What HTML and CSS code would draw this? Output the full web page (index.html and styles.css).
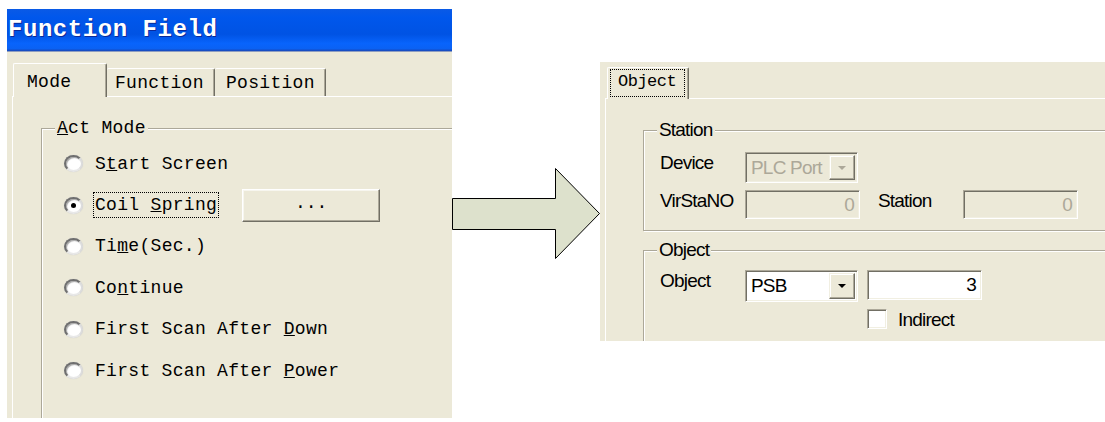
FILE: index.html
```html
<!DOCTYPE html>
<html>
<head>
<meta charset="utf-8">
<title>Function Field</title>
<link rel="stylesheet" href="styles.css">
</head>
<body>
<div class="stage">
  <div class="dlg dlg-left">
    <div class="titlebar">Function Field</div>
    <div class="client">
      <div class="tabs">
        <div class="tab tab-sel tab-mode">Mode</div>
        <div class="tab tab-func">Function</div>
        <div class="tab tab-pos">Position</div>
      </div>
      <div class="tabbody">
        <fieldset class="group group-act">
          <legend><u>A</u>ct Mode</legend>
          <div class="options">
            <div class="opt"><span class="radio"></span><span class="olbl">S<u>t</u>art Screen</span></div>
            <div class="opt"><span class="radio on"></span><span class="olbl focus">Coil <u>S</u>pring</span><span class="btn dots">...</span></div>
            <div class="opt"><span class="radio"></span><span class="olbl">Ti<u>m</u>e(Sec.)</span></div>
            <div class="opt"><span class="radio"></span><span class="olbl">Co<u>n</u>tinue</span></div>
            <div class="opt"><span class="radio"></span><span class="olbl">First Scan After <u>D</u>own</span></div>
            <div class="opt"><span class="radio"></span><span class="olbl">First Scan After <u>P</u>ower</span></div>
          </div>
        </fieldset>
      </div>
    </div>
  </div>

  <svg class="arrow" width="148" height="92" viewBox="0 0 148 92" xmlns="http://www.w3.org/2000/svg">
    <polygon points="0.5,30.5 103.5,30.5 103.5,0.5 147.5,45.5 103.5,90.5 103.5,61.5 0.5,61.5" fill="#dde1cc" stroke="#000" stroke-width="1"/>
  </svg>

  <div class="dlg dlg-right">
    <div class="tabs-r">
      <div class="tab-obj"><div class="focusbox">Object</div></div>
    </div>
    <div class="tabbody-r">
      <fieldset class="group group-st">
        <legend>Station</legend>
        <div class="rows">
          <div class="row">
            <span class="lab">Device</span>
            <div class="combo disabled combo-dev"><span class="val">PLC Port</span><span class="dd"></span></div>
          </div>
          <div class="row">
            <span class="lab">VirStaNO</span>
            <div class="field disabled">0</div>
            <span class="lab lab2">Station</span>
            <div class="field disabled">0</div>
          </div>
        </div>
      </fieldset>
      <fieldset class="group group-obj">
        <legend>Object</legend>
        <div class="rows">
          <div class="row">
            <span class="lab">Object</span>
            <div class="combo combo-obj"><span class="val">PSB</span><span class="dd"></span></div>
            <div class="field field-num">3</div>
          </div>
          <div class="row row-chk">
            <span class="check"></span>
            <span class="chklbl">Indirect</span>
          </div>
        </div>
      </fieldset>
    </div>
  </div>
</div>
</body>
</html>
```

FILE: styles.css
```css
* { box-sizing: border-box; }
html, body { margin: 0; padding: 0; background: #fff; }
body { width: 1105px; height: 422px; overflow: hidden; }

.stage { display: flex; align-items: flex-start; padding-left: 7px; }

.dlg { background: #ece9d8; overflow: hidden; flex: none; }

/* ---------- left dialog ---------- */
.dlg-left {
  margin-top: 9px;
  width: 445px;
  height: 409px;
  display: flex;
  flex-direction: column;
}
.titlebar {
  flex: none;
  height: 43px;
  padding-left: 1px;
  color: #fff;
  font: bold 24px/42px "Liberation Mono", monospace;
  letter-spacing: 0.55px;
  white-space: nowrap;
  text-shadow: 1px 1px 0 #0a2a9a;
  background: linear-gradient(to bottom, #0a5ae6 0%, #0057ec 20%, #0053e4 60%, #0864fc 82%, #0a62f4 94%, #1948b8 100%);
  border-bottom: 1px solid #8e9dc0;
}
.client {
  flex: 1;
  min-height: 0;
  display: flex;
  flex-direction: column;
  padding: 11px 0 0 5px;
}
.tabs {
  flex: none;
  position: relative;
  display: flex;
  align-items: flex-end;
  height: 34px;
  margin-bottom: -1px;
  padding-left: 1px;
}
.tab {
  flex: none;
  height: 28px;
  margin-bottom: 1px;
  padding-top: 4px;
  background: #ece9d8;
  border-top: 1px solid #fff;
  border-right: 1px solid #716f64;
  box-shadow: inset -1px 0 0 #aca899;
  border-radius: 2px 2px 0 0;
  font: 18px/20px "Liberation Mono", monospace;
  letter-spacing: 0.3px;
  white-space: nowrap;
  color: #000;
}
.tab-sel {
  height: 34px;
  margin-bottom: 0;
  padding-top: 8px;
  border-left: 1px solid #fff;
}
.tab-mode { width: 94px; padding-left: 13px; }
.tab-func { width: 108px; padding-left: 8px; }
.tab-pos { width: 111px; padding-left: 11px; }

.tabbody {
  flex: 1;
  min-height: 0;
  border-top: 1px solid #fff;
  border-left: 1px solid #fff;
}

.group {
  margin: 0;
  min-width: 0;
  border: 1px solid #aca899;
  box-shadow: inset 1px 1px 0 #fff, 1px 1px 0 #fff;
}
.group legend {
  padding: 0 2px;
  background: #ece9d8;
}
.group-act {
  margin: 21px 0 0 28px;
  width: 480px;
  height: 340px;
  padding: 5px 0 0 13px;
  font: 18px/20px "Liberation Mono", monospace;
  letter-spacing: 0.3px;
  color: #000;
}
.options { padding-left: 9px; }
.opt {
  display: flex;
  align-items: center;
  height: 41.4px;
  white-space: nowrap;
}
.radio {
  flex: none;
  width: 19px;
  height: 17px;
  margin-right: 12px;
  border-radius: 50%;
  background: #fff;
  border: 2px solid;
  border-color: #6f6f6f #dcdcdc #e8e8e8 #6f6f6f;
  box-shadow: inset 1px 1px 1px #a8a8a8, 0 0 1px #c8c8c8;
  display: flex;
  align-items: center;
  justify-content: center;
}
.radio.on::after {
  content: "";
  width: 5px;
  height: 5px;
  border-radius: 50%;
  background: #000;
}
.focus {
  border: 1px dotted #000;
  padding: 2px 1px 2px 1px;
  margin-left: -2px;
}
.btn {
  flex: none;
  display: flex;
  align-items: center;
  justify-content: center;
  background: #ece9d8;
  border: 1px solid;
  border-color: #fff #716f64 #716f64 #fff;
  box-shadow: inset -1px -1px 0 #aca899, inset 1px 1px 0 #f7f6ef;
}
.dots {
  width: 138px;
  height: 33px;
  margin-left: 23px;
  font: 18px/20px "Liberation Mono", monospace;
  letter-spacing: 0;
  padding-bottom: 4px;
}

/* ---------- arrow ---------- */
.arrow { flex: none; display: block; margin-top: 168px; }

/* ---------- right dialog ---------- */
.dlg-right {
  margin-top: 62px;
  width: 505px;
  height: 279px;
  padding: 5px 0 0 5px;
  display: flex;
  flex-direction: column;
  font: 19px/22px "Liberation Sans", Arial, sans-serif;
  letter-spacing: -0.8px;
  color: #000;
}
.tabs-r {
  flex: none;
  position: relative;
  display: flex;
  height: 32px;
  margin-bottom: -1px;
  padding-left: 2px;
}
.tab-obj {
  width: 82px;
  height: 32px;
  padding: 1px 0 0 2px;
  background: #ece9d8;
  border-top: 1px solid #fff;
  border-left: 1px solid #fff;
  border-right: 1px solid #716f64;
  box-shadow: inset -1px 0 0 #aca899;
  border-radius: 2px 2px 0 0;
}
.focusbox {
  width: 75px;
  height: 28px;
  border: 1px dotted #000;
  padding-left: 7px;
  font: 17px/24px "Liberation Mono", monospace;
  letter-spacing: -0.5px;
  white-space: nowrap;
}
.tabbody-r {
  flex: 1;
  min-height: 0;
  border-top: 1px solid #fff;
  border-left: 1px solid #fff;
}
.group-st {
  margin: 20px 0 0 37px;
  width: 480px;
  padding: 11px 0 11px 13px;
}
.group-obj {
  margin: 8px 0 0 37px;
  width: 480px;
  height: 200px;
  padding: 9px 0 0 13px;
}
.rows { padding-left: 3px; }
.row { display: flex; align-items: flex-start; }
.row + .row { margin-top: 7px; }
.row-chk { margin-top: 8px; }
.lab { flex: none; width: 85px; white-space: nowrap; }
.lab2 { margin-left: 18px; }

.combo, .field, .check {
  border: 1px solid;
  border-color: #aca899 #fff #fff #aca899;
  box-shadow: inset 1px 1px 0 #716f64, inset -1px -1px 0 #f1efe2;
}
.combo {
  flex: none;
  width: 113px;
  display: flex;
  align-items: center;
  padding: 2px;
  background: #fff;
  white-space: nowrap;
}
.combo-dev { height: 31px; }
.combo-obj { height: 32px; }
.combo .val { flex: 1; padding-left: 3px; overflow: hidden; }
.combo .dd {
  flex: none;
  width: 26px;
  align-self: stretch;
  background: #ece9d8;
  border: 1px solid;
  border-color: #f1efe2 #716f64 #716f64 #f1efe2;
  box-shadow: inset -1px -1px 0 #aca899, inset 1px 1px 0 #fff;
  display: flex;
  align-items: center;
  justify-content: center;
}
.combo .dd::after {
  content: "";
  border-left: 4px solid transparent;
  border-right: 4px solid transparent;
  border-top: 4px solid #000;
}
.combo.disabled { background: #ece9d8; color: #aca899; }
.combo.disabled .dd::after { border-top-color: #aca899; }

.field {
  flex: none;
  width: 115px;
  height: 29px;
  padding: 0 5px 0 0;
  text-align: right;
  line-height: 27px;
  background: #fff;
}
.field.disabled { background: #ece9d8; color: #aca899; }
.field-num { height: 30px; margin-left: 9px; line-height: 28px; }

.check {
  flex: none;
  width: 20px;
  height: 20px;
  margin-left: 207px;
  background: #fff;
}
.chklbl { margin-left: 11px; white-space: nowrap; }
```
